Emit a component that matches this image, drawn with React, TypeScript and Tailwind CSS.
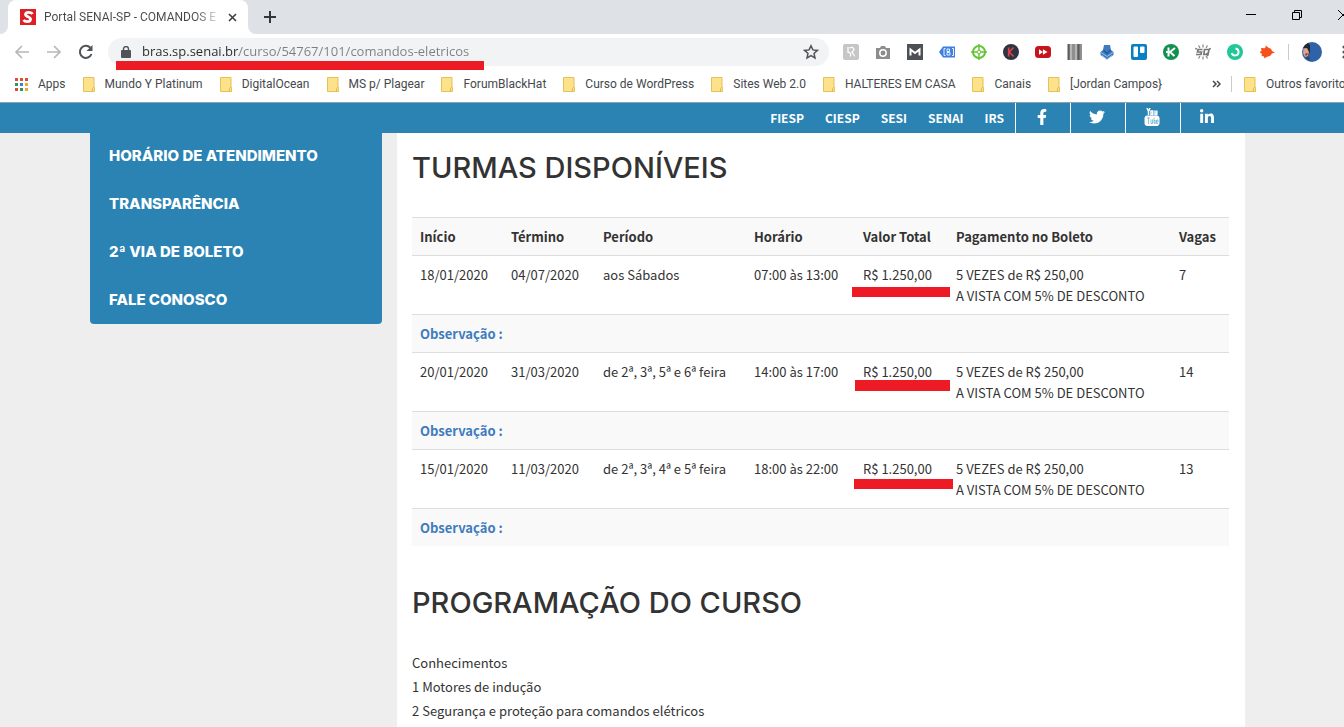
import React from "react";
import { FaFacebookF, FaTwitter, FaLinkedinIn } from "react-icons/fa";

const bookmarks = [
  "Mundo Y Platinum",
  "DigitalOcean",
  "MS p/ Plagear",
  "ForumBlackHat",
  "Curso de WordPress",
  "Sites Web 2.0",
  "HALTERES EM CASA",
  "Canais",
  "[Jordan Campos}",
];

const menu = [
  "HORÁRIO DE ATENDIMENTO",
  "TRANSPARÊNCIA",
  "2ª VIA DE BOLETO",
  "FALE CONOSCO",
];

const turmas = [
  {
    inicio: "18/01/2020",
    termino: "04/07/2020",
    periodo: "aos Sábados",
    horario: "07:00 às 13:00",
    vagas: "7",
    mark: "left-[-3px] top-[31px] w-[98px] h-[10px]",
  },
  {
    inicio: "20/01/2020",
    termino: "31/03/2020",
    periodo: "de 2ª, 3ª, 5ª e 6ª feira",
    horario: "14:00 às 17:00",
    vagas: "14",
    mark: "left-0 top-[27px] w-[95px] h-[11px]",
  },
  {
    inicio: "15/01/2020",
    termino: "11/03/2020",
    periodo: "de 2ª, 3ª, 4ª e 5ª feira",
    horario: "18:00 às 22:00",
    vagas: "13",
    mark: "left-[-1px] top-[29px] w-[99px] h-[10px]",
  },
];

const extensions = [
  {
    name: "Honey",
    art: (
      <>
        <rect width="16" height="16" rx="2" fill="#c6c6c6" />
        <path d="M5 3v6M5 8.500c2-.5 3 .5 2.500 4M6.500 4c3-1.500 5.500.5 4 2.500-.7 1-1.500 1.300-2 1.500 2 0 2 4.500 3.500 4" stroke="#fff" strokeWidth="1.300" fill="none" />
      </>
    ),
  },
  {
    name: "Captura",
    art: (
      <>
        <path d="M1 4h4l1-2h4l1 2h4v11H1z" fill="#8d8d8d" />
        <circle cx="8" cy="9" r="3.200" fill="none" stroke="#fff" strokeWidth="1.500" />
      </>
    ),
  },
  {
    name: "Moz",
    art: (
      <>
        <rect width="16" height="16" fill="#4d5156" />
        <path d="M3.500 11.500V5.500L8 9l4.500-3.500v6" stroke="#fff" strokeWidth="2" fill="none" />
      </>
    ),
  },
  {
    name: "Etiqueta",
    art: (
      <>
        <path d="M0 8l4-5.500h12v11H4z" fill="#3f7fe0" />
        <path d="M6.500 4.500h-1.500v7h1.500M13 4.500h1.500v7H13M8 5h2.500v2.500H8zM8 8.500h3V11H8z" stroke="#e8f1ff" strokeWidth="1" fill="none" />
      </>
    ),
  },
  {
    name: "Alvo",
    art: (
      <g stroke="#62c531" fill="none">
        <circle cx="8" cy="8" r="6" strokeWidth="2" />
        <path d="M8 0v6M8 10v6M0 8h6M10 8h6" strokeWidth="1.400" />
        <circle cx="8" cy="8" r="1.800" />
      </g>
    ),
  },
  {
    name: "Keywords",
    art: (
      <>
        <circle cx="8" cy="8" r="8" fill="#2e3440" />
        <path d="M5.700 3.500v9M10.500 3.500L6.200 8l4.500 4.500" stroke="#d9434b" strokeWidth="1.700" fill="none" />
      </>
    ),
  },
  {
    name: "Velocidade",
    art: (
      <>
        <rect y="2" width="16" height="12" rx="3.500" fill="#c4161c" />
        <path d="M4 5.300L8 8l-4 2.700zM8 5.300L12.500 8 8 10.700z" fill="#fff" />
      </>
    ),
  },
  {
    name: "Barras",
    art: (
      <>
        <rect x="1" width="14" height="16" fill="#8f8f8f" />
        <path d="M4 0v16M9 0v16" stroke="#b5b5b5" strokeWidth="2" />
        <path d="M1.500 0v16M11.500 0v16" stroke="#5b5b5b" strokeWidth="2" />
      </>
    ),
  },
  {
    name: "Download",
    art: (
      <>
        <path d="M5 1h6l1 5 2.500 2v3L8 15.500 1.500 11V8L4 6z" fill="#3d7cc0" />
        <path d="M2 8.500l6 4 6-4M3 11.500l5 4 5-4" stroke="#a9cdf0" strokeWidth=".8" fill="none" />
        <path d="M4.500 6l3.500 3.500L11.500 6" stroke="#24589a" strokeWidth="1.300" fill="none" />
      </>
    ),
  },
  {
    name: "Trello",
    art: (
      <>
        <rect width="16" height="16" rx="2" fill="#0a7fc4" />
        <rect x="2.500" y="2.500" width="4.500" height="10.500" rx="1" fill="#fff" />
        <rect x="9" y="2.500" width="4.500" height="6.500" rx="1" fill="#fff" />
      </>
    ),
  },
  {
    name: "Kaspersky",
    art: (
      <>
        <circle cx="8" cy="8" r="8" fill="#10924f" />
        <path d="M5.500 3.500v9M12 4L7 8l4.500 4M3 8h4" stroke="#fff" strokeWidth="2" fill="none" />
      </>
    ),
  },
  {
    name: "SEOquake",
    art: (
      <>
        <path d="M8 .5v3M8 12.500v3M3.500 1.500l1.500 2.500M12.500 1.500L11 4M3.500 14.500L5 12M12.500 14.500L11 12M0 4.500l2 .5M16 4.500l-2 .5" stroke="#8a8a8a" strokeWidth="1.300" />
        <path d="M7.500 5.500H3L2.500 8H6.500L6 10.500H1M9.500 5.500H14l-1 5H8.800zM11.500 9l1.500 3" stroke="#777" strokeWidth="1.700" fill="none" />
      </>
    ),
  },
  {
    name: "Grammar",
    art: (
      <>
        <circle cx="8" cy="8" r="8" fill="#1fc896" />
        <path d="M8.500 4.500a3.500 3.500 0 1 1-3.800 4.500" stroke="#fff" strokeWidth="1.900" fill="none" />
      </>
    ),
  },
  {
    name: "Raposa",
    art: (
      <path d="M2 4l4 .2L7 1.500l2.500 2.300 2.500 1 1 2.200L16 8.500l-3 1-2 2.500-3 .8L5.500 14.500l-.5-2-2.500-.7L3 10 .5 8l2-1z" fill="#f4511e" />
    ),
  },
];

const cell = "p-2 align-top text-left";

function Folder() {
  return (
    <svg width="12" height="15" viewBox="0 0 12 15" className="shrink-0">
      <path d="M.5.500h10.500v9.500l.5 1v3.500H.500z" fill="#fde28a" stroke="#e3c15c" />
      <path d="M9.500 14.500v-3l1.500-1.500" stroke="#e3b93f" fill="none" />
    </svg>
  );
}

function BrowserTabs() {
  return (
    <div className="flex h-[34px] items-center justify-between bg-[#dee1e6] pl-2">
      <div className="flex h-full items-center">
        <div className="relative flex h-full w-60 items-center justify-between rounded-t-lg bg-white pl-3 pr-[6px]">
          <svg width="16" height="16" viewBox="0 0 16 16" className="shrink-0">
            <rect width="16" height="16" fill="#dd1f26" />
            <path d="M12.500 5C11.500 3 6 2.500 5.500 5.200 5.200 8 11 7.700 10.500 10.600 10 13.500 5 13 3.500 11" stroke="#fff" strokeWidth="2.800" fill="none" />
          </svg>
          <span className="ml-2 flex-1 overflow-hidden whitespace-nowrap bg-linear-to-r from-[#45494d] from-85% to-transparent bg-clip-text text-xs text-transparent">
            Portal SENAI-SP - COMANDOS E
          </span>
          <button aria-label="Fechar guia" className="flex size-5 items-center justify-center">
            <svg width="9" height="9" viewBox="0 0 9 9">
              <path d="M1 1l7 7M8 1L1 8" stroke="#3c4043" strokeWidth="1.600" />
            </svg>
          </button>
          <svg width="8" height="8" viewBox="0 0 8 8" className="absolute -left-2 bottom-0">
            <path d="M8 0v8H0a8 8 0 0 0 8-8z" fill="#fff" />
          </svg>
          <svg width="8" height="8" viewBox="0 0 8 8" className="absolute -right-2 bottom-0">
            <path d="M0 0v8h8a8 8 0 0 1-8-8z" fill="#fff" />
          </svg>
        </div>
        <button aria-label="Nova guia" className="ml-4">
          <svg width="12" height="12" viewBox="0 0 12 12">
            <path d="M6 0v12M0 6h12" stroke="#33363a" strokeWidth="2" />
          </svg>
        </button>
      </div>
      <div className="-mr-[22px] flex h-8">
        <button aria-label="Minimizar" className="flex w-[46px] items-center justify-center pb-1">
          <svg width="10" height="10" viewBox="0 0 10 10">
            <path d="M0 4.500h10" stroke="#000" />
          </svg>
        </button>
        <button aria-label="Restaurar" className="flex w-[46px] items-center justify-center pb-1">
          <svg width="10" height="10" viewBox="0 0 10 10" fill="none" stroke="#000">
            <path d="M.5 2.500h7v7h-7zM2.500 2.500v-2h7v7h-2" />
          </svg>
        </button>
        <button aria-label="Fechar" className="flex w-[46px] items-center justify-center pb-1">
          <svg width="10" height="10" viewBox="0 0 10 10">
            <path d="M0 0l10 10M10 0L0 10" stroke="#000" />
          </svg>
        </button>
      </div>
    </div>
  );
}

function Toolbar() {
  return (
    <div className="flex h-9 items-center bg-white pl-[14px]">
      <div className="flex gap-4">
        <button aria-label="Voltar">
          <svg width="16" height="16" viewBox="0 0 16 16" fill="none" stroke="#b6b8ba" strokeWidth="1.700">
            <path d="M15 8H2M8 2L2 8l6 6" />
          </svg>
        </button>
        <button aria-label="Avançar">
          <svg width="16" height="16" viewBox="0 0 16 16" fill="none" stroke="#b6b8ba" strokeWidth="1.700">
            <path d="M1 8h13M8 2l6 6-6 6" />
          </svg>
        </button>
        <button aria-label="Recarregar">
          <svg width="16" height="16" viewBox="0 0 16 16">
            <path d="M13.500 10A6 6 0 1 1 12.300 3.800" fill="none" stroke="#505458" strokeWidth="2" />
            <path d="M14.500 1v6h-6z" fill="#505458" />
          </svg>
        </button>
      </div>
      <div className="relative ml-[14px] flex h-7 flex-1 items-center rounded-full bg-[#f1f3f4] pl-[13px] pr-[10px]">
        <svg width="10" height="12" viewBox="0 0 10 12" className="shrink-0">
          <rect y="4" width="10" height="8" rx="1" fill="#505458" />
          <path d="M2.500 4.500V3a2.500 2.500 0 0 1 5 0v1.500" fill="none" stroke="#505458" strokeWidth="1.400" />
        </svg>
        <input
          type="text"
          aria-label="Endereço"
          defaultValue="bras.sp.senai.br/curso/54767/101/comandos-eletricos"
          className="ml-[11px] min-w-0 flex-1 bg-[linear-gradient(90deg,#26292c_97px,#7b7f84_97px)] bg-clip-text font-['Open_Sans',sans-serif] text-[13px] text-transparent outline-none"
        />
        <button aria-label="Favoritar">
          <svg width="16" height="16" viewBox="0 0 16 16">
            <path d="M8 1.800l1.900 4.100 4.500.5-3.400 3 1 4.500L8 11.600l-4 2.300 1-4.500-3.400-3 4.500-.5z" fill="none" stroke="#505458" strokeWidth="1.500" />
          </svg>
        </button>
        <div className="absolute left-2 top-[23px] h-[9px] w-[368px] bg-[#ed1c24]" />
      </div>
      <div className="ml-[14px] flex shrink-0 gap-4">
        {extensions.map((ext) => (
          <button key={ext.name} aria-label={ext.name}>
            <svg width="16" height="16" viewBox="0 0 16 16">
              {ext.art}
            </svg>
          </button>
        ))}
      </div>
      <div className="ml-[13px] h-4 w-px bg-[#c9cccf]" />
      <button aria-label="Perfil" className="ml-[13px] shrink-0">
        <svg width="20" height="20" viewBox="0 0 20 20">
          <circle cx="10" cy="10" r="10" fill="#2f62a8" />
          <path d="M6 1A10 10 0 0 0 1 6l4 1 1 7 2-4V3z" fill="#222631" />
          <path d="M1.500 6.500L5 6l2 4-1 4-3 1-2-4z" fill="#dca58d" />
          <path d="M3 12l2-1 1 1-2 2z" fill="#8d3a3a" />
          <path d="M3 16l4-2 1.500 5.500z" fill="#39486a" />
        </svg>
      </button>
      <button aria-label="Menu" className="-mr-[2px] ml-5 shrink-0">
        <svg width="4" height="14" viewBox="0 0 4 14" fill="#505458">
          <circle cx="2" cy="2" r="1.600" />
          <circle cx="2" cy="7" r="1.600" />
          <circle cx="2" cy="12" r="1.600" />
        </svg>
      </button>
    </div>
  );
}

function BookmarksBar() {
  return (
    <div className="flex h-8 items-center justify-between whitespace-nowrap bg-white pb-1 pl-[15px] text-xs text-[#45494d]">
      <div className="flex items-center gap-[17px]">
        <a href="#apps" className="flex items-center gap-[10px]">
          <svg width="13" height="13" viewBox="0 0 13 13">
            <path d="M0 0h3v3H0zM10 0h3v3h-3zM0 10h3v3H0z" fill="#dd4b3e" />
            <path d="M5 0h3v3H5z" fill="#d8552b" />
            <path d="M0 5h3v3H0zM5 10h3v3H5z" fill="#2c9a55" />
            <path d="M5 5h3v3H5z" fill="#3b7de0" />
            <path d="M10 5h3v3h-3zM10 10h3v3h-3z" fill="#e8ab2e" />
          </svg>
          Apps
        </a>
        {bookmarks.map((name) => (
          <a key={name} href="#favoritos" className="flex items-center gap-[10px]">
            <Folder />
            {name}
          </a>
        ))}
      </div>
      <div className="flex w-[132px] shrink-0 items-center">
        <button aria-label="Mais favoritos" className="shrink-0">
          <svg width="9" height="8" viewBox="0 0 9 8">
            <path d="M1 1l3 3-3 3M5 1l3 3-3 3" stroke="#45494d" strokeWidth="1.500" fill="none" />
          </svg>
        </button>
        <div className="ml-[10px] h-4 w-px shrink-0 bg-[#c9cccf]" />
        <a href="#outros" className="ml-3 flex shrink-0 items-center gap-[10px]">
          <Folder />
          Outros favoritos
        </a>
      </div>
    </div>
  );
}

function TopBar() {
  const links = ["FIESP", "CIESP", "SESI", "SENAI", "IRS"];
  const social = [
    { name: "Facebook", icon: <FaFacebookF size={16} /> },
    { name: "Twitter", icon: <FaTwitter size={16} /> },
    {
      name: "YouTube",
      icon: (
        <svg width="16" height="18" viewBox="0 0 16 18" fill="none" stroke="#fff">
          <path d="M3 0l1.500 3.500V7M6 0L4.500 3.500M7 3h1.800v3.500H7zM11 2.500v4h1.800v-4M12.800 6v1" strokeWidth="1.500" />
          <rect x="1" y="8" width="14" height="9.500" rx="2" fill="#fff" />
          <path d="M3 10h3M4.500 10v6M7 11.500v4h1.500v-4M10 9.500v6h1.200v-3H10M14 15.500h-1.500v-3.500H14v2h-1.500" stroke="#2a83b3" strokeWidth=".5" />
        </svg>
      ),
    },
    { name: "LinkedIn", icon: <FaLinkedinIn size={16} /> },
  ];

  return (
    <header className="flex h-[31px] justify-end border-t border-[#8aa5b1] bg-[#2a83b3] pr-[109px] text-white">
      <nav className="flex items-center gap-[21px] pr-[11px] text-xs font-bold">
        {links.map((link) => (
          <a key={link} href="#instituicao">
            {link}
          </a>
        ))}
      </nav>
      {social.map((item) => (
        <a
          key={item.name}
          href="#social"
          aria-label={item.name}
          className="flex w-[55px] items-center justify-center border-l border-white pb-[2px] pr-[2px]"
        >
          {item.icon}
        </a>
      ))}
    </header>
  );
}

function TurmasTable() {
  return (
    <table className="mt-[31px] w-full table-fixed border-collapse text-[13px] leading-[21px]">
      <colgroup>
        <col className="w-[91px]" />
        <col className="w-[92px]" />
        <col className="w-[151px]" />
        <col className="w-[109px]" />
        <col className="w-[93px]" />
        <col />
        <col className="w-[58px]" />
      </colgroup>
      <thead>
        <tr className="border-t border-[#ddd] bg-[#f9f9f9]">
          <th className={cell}>Início</th>
          <th className={cell}>Término</th>
          <th className={cell}>Período</th>
          <th className={cell}>Horário</th>
          <th className={cell}>Valor Total</th>
          <th className={cell}>Pagamento no Boleto</th>
          <th className={cell}>Vagas</th>
        </tr>
      </thead>
      <tbody>
        {turmas.map((turma) => (
          <React.Fragment key={turma.inicio}>
            <tr className="border-t border-[#ddd]">
              <td className={cell}>{turma.inicio}</td>
              <td className={cell}>{turma.termino}</td>
              <td className={cell}>{turma.periodo}</td>
              <td className={cell}>{turma.horario}</td>
              <td className="relative p-2 align-top">
                R$ 1.250,00
                <span className={`absolute bg-[#ed1c24] ${turma.mark}`} />
              </td>
              <td className={cell}>
                5 VEZES de R$ 250,00
                <br />A VISTA COM 5% DE DESCONTO
              </td>
              <td className={cell}>{turma.vagas}</td>
            </tr>
            <tr className="border-t border-[#ddd] bg-[#f9f9f9]">
              <td colSpan={7} className="p-2 font-bold text-[#3f7bbf]">
                Observação :
              </td>
            </tr>
          </React.Fragment>
        ))}
      </tbody>
    </table>
  );
}

export default function App() {
  return (
    <div className="flex min-h-screen flex-col overflow-hidden bg-[#eee] font-['Noto_Sans_CJK_SC','Noto_Sans',sans-serif]">
      <div className="font-['Roboto','Noto_Sans',sans-serif]">
        <BrowserTabs />
        <Toolbar />
        <BookmarksBar />
      </div>
      <TopBar />
      <div className="flex flex-1 items-stretch gap-[15px] pl-[90px] pr-[99px]">
        <aside className="w-[292px] shrink-0">
          <nav className="flex flex-col gap-6 rounded-b bg-[#2a83b3] px-[19px] pb-3 pt-[11px] font-['Inter',sans-serif] text-[15px] leading-6 font-extrabold text-white">
            {menu.map((item) => (
              <a key={item} href="#menu">
                {item}
              </a>
            ))}
          </nav>
        </aside>
        <main className="min-w-0 flex-1 bg-white px-4 pl-[15px] pt-[17px] text-[#333]">
          <h2 className="font-['Inter',sans-serif] text-[29px] leading-9 font-medium">
            TURMAS DISPONÍVEIS
          </h2>
          <TurmasTable />
          <h2 className="mt-[39px] font-['Inter',sans-serif] text-[29px] leading-9 font-medium">
            PROGRAMAÇÃO DO CURSO
          </h2>
          <div className="mt-[30px] text-[13px] leading-6">
            <p>Conhecimentos</p>
            <p>1 Motores de indução</p>
            <p>2 Segurança e proteção para comandos elétricos</p>
          </div>
        </main>
      </div>
    </div>
  );
}
